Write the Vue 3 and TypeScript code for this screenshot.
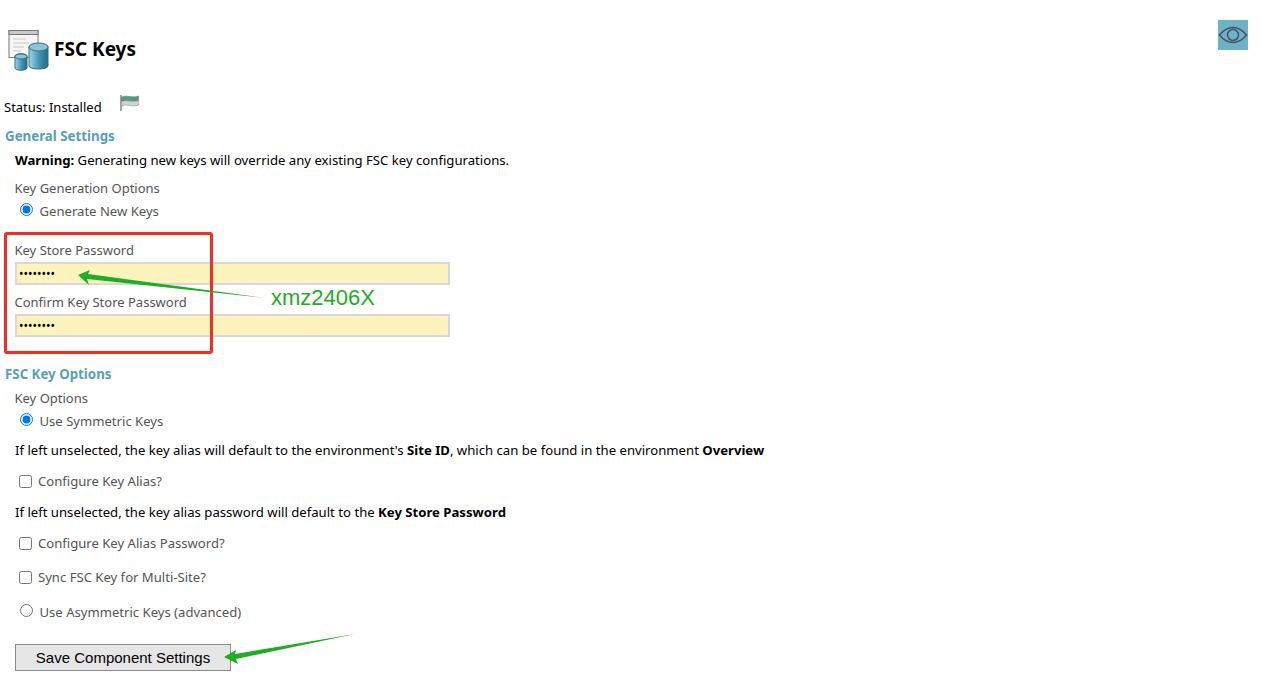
<script setup lang="ts">
const password = "xmz2406X";
</script>

<template>
	<div class="page">
		<header class="head">
			<svg class="app-icon" width="42" height="42" viewBox="0 0 42 42">
				<defs>
					<linearGradient id="can" x1="0" y1="0" x2="1" y2="0">
						<stop offset="0" stop-color="#a5d3e2" />
						<stop offset="0.55" stop-color="#3f93b0" />
						<stop offset="1" stop-color="#1d6d8b" />
					</linearGradient>
				</defs>
				<rect x="1" y="1.500" width="29" height="27" fill="#f6f6f6" stroke="#777" />
				<rect x="1" y="1.500" width="29" height="4" fill="#c9c9c9" stroke="#777" />
				<path d="M5 10h13M5 14h16M5 18h11M5 22h8" stroke="#c8c8c8" stroke-width="1.200" />
				<path d="M21 18c0-4 19-4 19 0v19c0 4-19 4-19 0z" fill="url(#can)" stroke="#3d6f84" />
				<ellipse cx="30.500" cy="18" rx="9.500" ry="4" fill="#8cc5d8" stroke="#3d6f84" />
				<path d="M7 27c0-3 12-3 12 0v12c0 3-12 3-12 0z" fill="url(#can)" stroke="#3d6f84" />
				<ellipse cx="13" cy="27.500" rx="6" ry="2.500" fill="#8cc5d8" stroke="#3d6f84" />
			</svg>
			<h1 class="title">FSC Keys</h1>
			<div class="eye">
				<svg width="30" height="30" viewBox="0 0 30 30" fill="none" stroke="#47525a" stroke-width="1.500">
					<path d="M1.500 15C6 9.500 10.500 7.500 15 7.500S24 9.500 28.500 15C24 20.500 19.500 22.500 15 22.500S6 20.500 1.500 15z" />
					<circle cx="15" cy="15" r="5.500" />
				</svg>
			</div>
		</header>

		<div class="status">
			<span>Status: Installed</span>
			<svg class="flag" width="20" height="18" viewBox="0 0 20 18">
				<path d="M1 1v16" stroke="#666" stroke-width="1.200" />
				<path d="M1.500 3c6-2.500 10 1.500 17-1v4.500c-7 2.500-11-1.500-17 1z" fill="#4f9e82" stroke="#5b6f66" stroke-width="0.500" />
				<path d="M1.500 7.500c6-2.500 10 1.500 17-1v4.500c-7 2.500-11-1.500-17 1z" fill="#cfd3d0" stroke="#7f8783" stroke-width="0.500" />
			</svg>
		</div>

		<h2 class="section first">General Settings</h2>
		<div class="body">
			<p class="note warning"><b>Warning:</b> Generating new keys will override any existing FSC key configurations.</p>
			<div class="label gen-label">Key Generation Options</div>
			<label class="option radio gen-radio"><input type="radio" name="gen" checked /> <span>Generate New Keys</span></label>

			<div class="label store-label">Key Store Password</div>
			<input class="field" type="password" :value="password" />
			<div class="label confirm-label">Confirm Key Store Password</div>
			<input class="field" type="password" :value="password" />
		</div>

		<h2 class="section second">FSC Key Options</h2>
		<div class="body">
			<div class="label opts-label">Key Options</div>
			<label class="option radio sym-radio"><input type="radio" name="kind" checked /> <span>Use Symmetric Keys</span></label>
			<p class="note alias-note">If left unselected, the key alias will default to the environment's <b>Site ID</b>, which can be found in the environment <b>Overview</b></p>
			<label class="option check alias-check"><input type="checkbox" /> <span>Configure Key Alias?</span></label>
			<p class="note pwd-note">If left unselected, the key alias password will default to the <b>Key Store Password</b></p>
			<label class="option check pwd-check"><input type="checkbox" /> <span>Configure Key Alias Password?</span></label>
			<label class="option check sync-check"><input type="checkbox" /> <span>Sync FSC Key for Multi-Site?</span></label>
			<label class="option radio asym-radio"><input type="radio" name="kind" /> <span>Use Asymmetric Keys (advanced)</span></label>
			<button class="save" type="button">Save Component Settings</button>
		</div>

		<!-- annotations drawn over the page -->
		<div class="red-box"></div>
		<span class="pw-note">{{ password }}</span>
		<svg class="arrows" width="1274" height="684" viewBox="0 0 1274 684">
			<path d="M78 275 L90 270 L88 274 L266 298 L87 279 L89 285 Z" fill="#1ead24" />
			<path d="M224 657 L236 650 L235 654 L355 634 L236 659 L238 664 Z" fill="#1ead24" />
		</svg>
	</div>
</template>

<style>
html,
body {
	background: #fff;
}
</style>

<style scoped>
.page {
	position: relative;
	width: 1274px;
	height: 684px;
	overflow: hidden;
	font-family: "Noto Sans", "Open Sans", sans-serif;
	font-size: 13.150px;
	color: #000;
}
.head {
	display: flex;
	align-items: center;
	height: 44px;
	padding: 28px 26px 0 8px;
}
.app-icon {
	flex: none;
}
.title {
	margin: -2px 0 0 4px;
	font-size: 19px;
	line-height: 24px;
	font-weight: 700;
}
.eye {
	width: 30px;
	height: 30px;
	margin-left: auto;
	margin-top: -8px;
	align-self: flex-start;
	background: #6eb2c8;
}
.status {
	display: flex;
	align-items: flex-start;
	height: 20px;
	margin-top: 25px;
	padding-left: 4px;
	font-size: 13px;
	line-height: 20px;
}
.flag {
	margin: -3px 0 0 18px;
}
.section {
	margin: 0;
	padding-left: 5px;
	font-size: 13.300px;
	line-height: 18px;
	font-weight: 700;
	color: #5a9fb8;
}
.section.first {
	margin-top: 10px;
}
.section.second {
	margin-top: 28px;
}
.body {
	display: flex;
	flex-direction: column;
	align-items: flex-start;
	padding-left: 15px;
}
.note {
	margin: 0;
	line-height: 18px;
}
.label {
	margin-left: -0.500px;
	font-size: 13px;
	line-height: 18px;
	color: #555;
}
.option {
	display: flex;
	align-items: center;
	font-size: 13.100px;
	line-height: 18px;
	color: #555;
}
.option input {
	margin: 0;
	flex: none;
}
.radio {
	padding-left: 5px;
}
.radio input {
	margin-top: -3px;
}
.radio span {
	margin-left: 6.500px;
}
.check {
	padding-left: 4px;
}
.check span {
	margin-left: 6px;
}
.field {
	box-sizing: border-box;
	width: 435px;
	height: 23px;
	padding: 0 2px;
	border: 2px solid #d8d8d8;
	background: #fdf4bd;
	font-family: inherit;
	font-size: 12px;
	outline: none;
}
.warning {
	margin-top: 6px;
}
.gen-label {
	margin-top: 10px;
}
.gen-radio {
	margin-top: 5px;
}
.store-label {
	margin-top: 21px;
	margin-bottom: 3px;
}
.confirm-label {
	margin-top: 8px;
	margin-bottom: 3px;
}
.opts-label {
	margin-top: 6px;
}
.sym-radio {
	margin-top: 5px;
}
.alias-note {
	margin-top: 11px;
}
.alias-check {
	margin-top: 13px;
}
.pwd-note {
	margin-top: 13px;
}
.pwd-check {
	margin-top: 13px;
}
.sync-check {
	margin-top: 16px;
}
.asym-radio {
	margin-top: 17px;
}
.save {
	box-sizing: border-box;
	width: 216px;
	height: 27px;
	margin-top: 23px;
	padding: 0;
	border: 1px solid #8a8a8a;
	background: #e6e6e6;
	font-family: "Liberation Sans", Arial, sans-serif;
	font-size: 15px;
	color: #000;
}
.red-box {
	position: absolute;
	left: 4px;
	top: 232px;
	width: 203px;
	height: 116px;
	border: 3px solid #fb2b24;
	border-radius: 3px;
}
.pw-note {
	position: absolute;
	left: 271px;
	top: 284px;
	font-family: "Liberation Sans", Arial, sans-serif;
	font-size: 22px;
	line-height: 28px;
	color: #1ead24;
}
.arrows {
	position: absolute;
	left: 0;
	top: 0;
	pointer-events: none;
}
</style>
